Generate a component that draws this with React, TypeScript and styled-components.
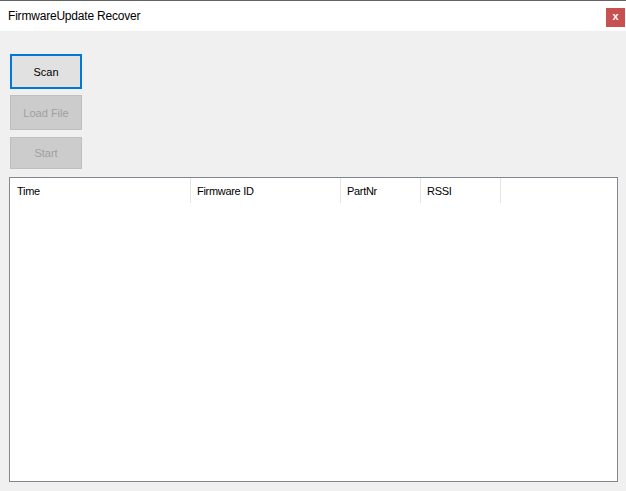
import { FC } from "react";
import styled, { createGlobalStyle } from "styled-components";

const GlobalStyle = createGlobalStyle`
  html, body {
    margin: 0;
    padding: 0;
    background: #f0f0f0;
  }
  body {
    font-family: "Liberation Sans", Arial, sans-serif;
    font-size: 12px;
  }
`;

type Column = {
  title: string;
  width: number;
  first?: boolean;
};

const COLUMNS: Column[] = [
  { title: "Time", width: 181, first: true },
  { title: "Firmware ID", width: 150 },
  { title: "PartNr", width: 80 },
  { title: "RSSI", width: 80 },
];

const App: FC = () => {
  return (
    <>
      <GlobalStyle />
      <Window>
        <TitleBar>
          <Title>FirmwareUpdate Recover</Title>
          <CloseButton>x</CloseButton>
        </TitleBar>
        <Content>
          <ButtonStack>
            <ActionButton focused height={35}>
              Scan
            </ActionButton>
            <ActionButton disabled height={35}>
              Load File
            </ActionButton>
            <ActionButton disabled height={32}>
              Start
            </ActionButton>
          </ButtonStack>
          <ListView>
            <HeaderRow>
              {COLUMNS.map((col) => (
                <HeaderCell key={col.title} width={col.width} first={col.first}>
                  {col.title}
                </HeaderCell>
              ))}
            </HeaderRow>
          </ListView>
        </Content>
      </Window>
    </>
  );
};

export default App;

const Window = styled.div`
  width: 626px;
  height: 491px;
  display: flex;
  flex-direction: column;
  border-top: 1px solid #646464;
  box-sizing: border-box;
  background: #f0f0f0;
`;

const TitleBar = styled.div`
  height: 30px;
  background: #ffffff;
  display: flex;
  align-items: center;
  justify-content: space-between;
  padding: 0 1px 0 8px;
  flex-shrink: 0;
`;

const Title = styled.span`
  color: #000000;
  font-size: 12px;
  letter-spacing: -0.2px;
`;

const CloseButton = styled.div`
  width: 19px;
  height: 19px;
  margin-top: 3px;
  background: #c75050;
  color: #ffffff;
  font-weight: bold;
  font-size: 11px;
  display: flex;
  align-items: center;
  justify-content: center;
  line-height: 1;
  padding-bottom: 2px;
  box-sizing: border-box;
`;

const Content = styled.div`
  flex: 1;
  display: flex;
  flex-direction: column;
  padding: 23px 8px 9px 9px;
  min-height: 0;
`;

const ButtonStack = styled.div`
  display: flex;
  flex-direction: column;
  align-items: flex-start;
  padding-left: 1px;
  gap: 6px;
  margin-bottom: 8px;

  & > :nth-child(3) {
    margin-top: 1px;
  }
`;

const ActionButton = styled.button<{ focused?: boolean; height: number }>`
  width: 72px;
  height: ${(p) => p.height}px;
  box-sizing: border-box;
  font-family: "Liberation Sans", Arial, sans-serif;
  font-size: 11px;
  padding: 0;
  margin: 0;
  border: ${(p) => (p.focused ? "2px solid #0078d7" : "1px solid #bfbfbf")};
  background: ${(p) => (p.disabled ? "#cccccc" : "#e1e1e1")};
  color: ${(p) => (p.disabled ? "#a0a0a0" : "#000000")};
  outline: none;
`;

const ListView = styled.div`
  flex: 1;
  background: #ffffff;
  border: 1px solid #828790;
  min-height: 0;
`;

const HeaderRow = styled.div`
  display: flex;
  height: 25px;
`;

const HeaderCell = styled.div<{ width: number; first?: boolean }>`
  width: ${(p) => p.width}px;
  box-sizing: border-box;
  display: flex;
  align-items: center;
  padding-left: ${(p) => (p.first ? 7 : 6)}px;
  border-right: 1px solid #e5e5e5;
  color: #000000;
  font-size: 11px;
  letter-spacing: -0.3px;
`;
